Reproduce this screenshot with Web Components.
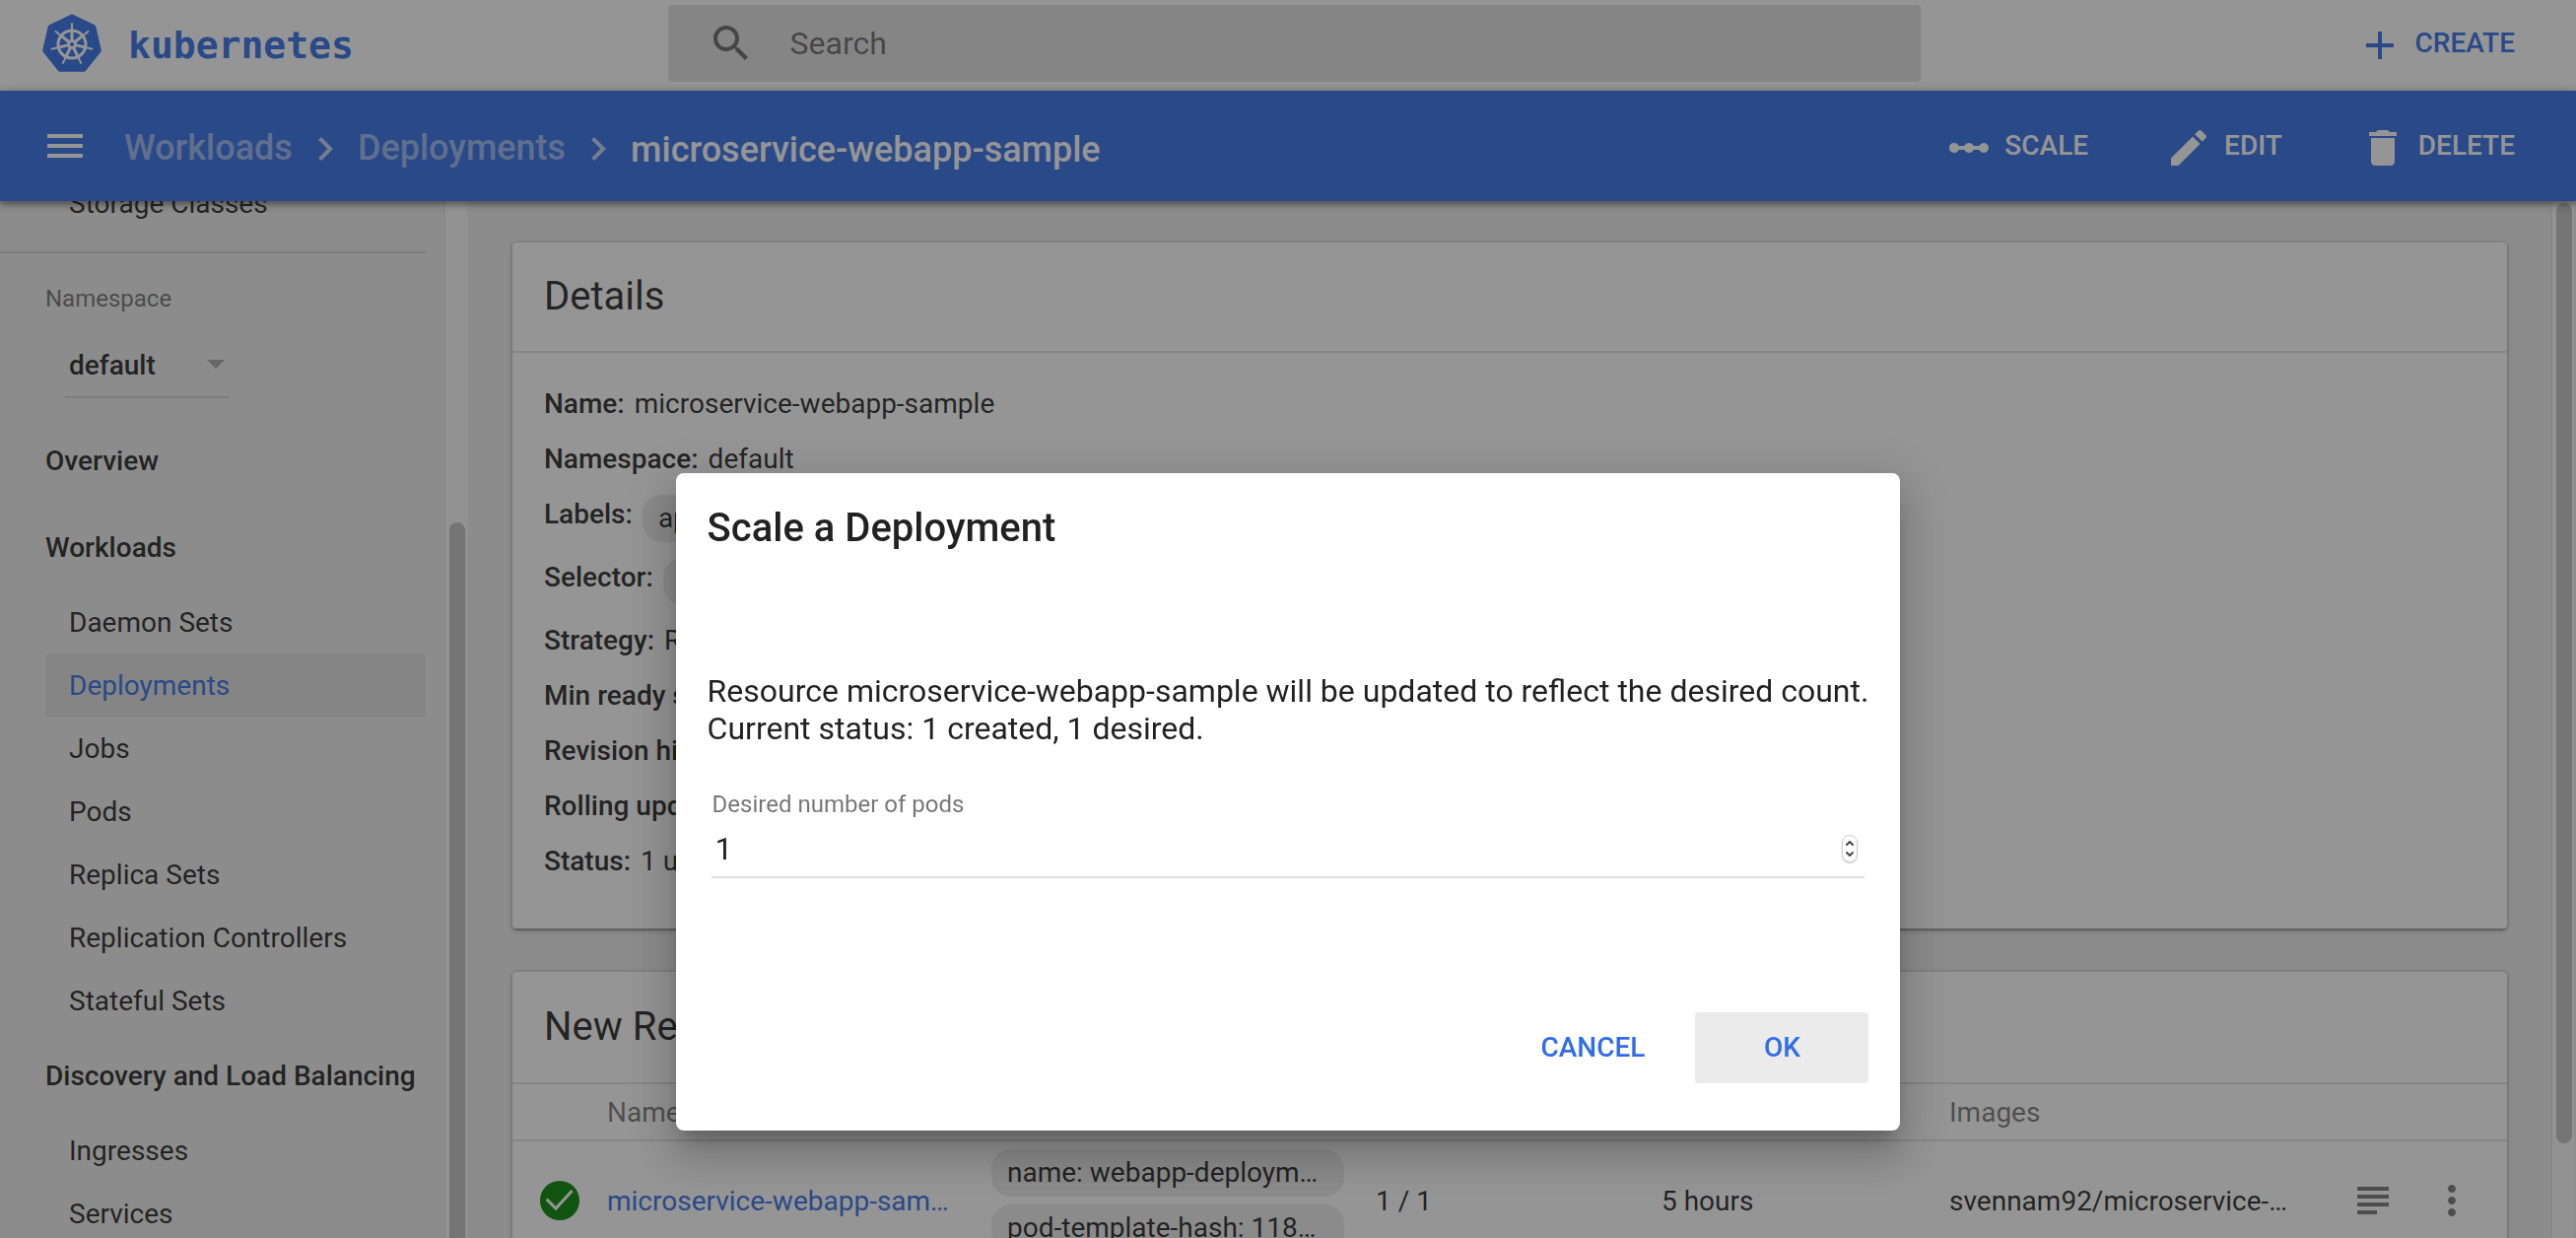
<!DOCTYPE html>
<html lang="en">
<head>
<meta charset="utf-8">
<title>microservice-webapp-sample - Kubernetes Dashboard</title>
<style>
  html, body { height: 100%; margin: 0; overflow: hidden; }
  body {
    font-family: Roboto, "Liberation Sans", sans-serif;
    font-size: 28px;
    color: rgba(0,0,0,.87);
    --primary: #326de6;
    --muted: rgba(0,0,0,.54);
    --line: #e0e0e0;
  }
</style>
</head>
<body>
<kd-app></kd-app>

<script>
const define = (name, html, setup) => {
  const template = document.createElement('template');
  template.innerHTML = html;
  customElements.define(name, class extends HTMLElement {
    constructor() {
      super();
      this.attachShadow({ mode: 'open' }).append(template.content.cloneNode(true));
    }
    connectedCallback() { if (setup) setup.call(this, this.shadowRoot); }
  });
};

const ICONS = {
  menu: '<path d="M3 18h18v-2H3v2zm0-5h18v-2H3v2zm0-7v2h18V6H3z"/>',
  search: '<path d="M15.5 14h-.79l-.28-.27C15.41 12.59 16 11.11 16 9.5 16 5.91 13.09 3 9.5 3S3 5.91 3 9.5 5.91 16 9.5 16c1.61 0 3.09-.59 4.23-1.57l.27.28v.79l5 4.99L20.49 19l-4.99-5zm-6 0C7.01 14 5 11.99 5 9.5S7.01 5 9.5 5 14 7.01 14 9.5 11.99 14 9.5 14z"/>',
  add: '<path d="M19 13h-6v6h-2v-6H5v-2h6V5h2v6h6v2z"/>',
  chevron: '<path d="M10 6L8.59 7.41 13.17 12l-4.58 4.59L10 18l6-6z"/>',
  scale: '<path d="M4.5 9.5a2.5 2.5 0 0 1 2.3 1.5h2.9a2.5 2.5 0 0 1 4.6 0h2.9a2.5 2.5 0 1 1 0 2h-2.9a2.5 2.5 0 0 1-4.6 0H6.8a2.5 2.5 0 1 1-2.3-3.5z"/>',
  edit: '<path d="M3 17.25V21h3.75L17.81 9.94l-3.75-3.75L3 17.25zM20.71 7.04c.39-.39.39-1.02 0-1.41l-2.34-2.34c-.39-.39-1.02-.39-1.41 0l-1.83 1.83 3.75 3.75 1.83-1.83z"/>',
  remove: '<path d="M6 19c0 1.1.9 2 2 2h8c1.1 0 2-.9 2-2V7H6v12zM19 4h-3.500l-1-1h-5l-1 1H5v2h14V4z"/>',
  check: '<circle cx="12" cy="12" r="10"/><path d="M5.300 11.300L10 16l8.300-9" fill="none" stroke="#fff" stroke-width="1.500"/>',
  logs: '<path d="M4 5h16v2H4zM4 9h16v2H4zM4 13h16v2H4zM4 17h10v2H4z"/>',
  more: '<path d="M12 8c1.100 0 2-.9 2-2s-.9-2-2-2-2 .9-2 2 .9 2 2 2zm0 2c-1.100 0-2 .9-2 2s.9 2 2 2 2-.9 2-2-.9-2-2-2zm0 6c-1.100 0-2 .9-2 2s.9 2 2 2 2-.9 2-2-.9-2-2-2z"/>'
};

define('kd-icon', `
  <style>
    :host { display: block; flex: none; width: 48px; height: 48px; }
    svg { display: block; width: 100%; height: 100%; fill: currentColor; }
  </style>
  <svg viewBox="0 0 24 24" aria-hidden="true"></svg>`,
  function (root) { root.querySelector('svg').innerHTML = ICONS[this.getAttribute('name')]; });

/* The seven-sided badge with the ship's wheel */
define('kd-logo', `
  <style>
    :host { display: flex; align-items: center; gap: 26px; color: var(--primary); }
    svg { display: block; width: 62px; height: 62px; }
    span { font: bold 38px/48px "DejaVu Sans Mono", monospace; padding-top: 4px; }
  </style>
  <svg viewBox="-31 -31 62 62" aria-hidden="true"></svg>
  <span>kubernetes</span>`,
  function (root) {
    const at = (r, i) => {
      const a = i * 2 * Math.PI / 7 - Math.PI / 2;
      return [r * Math.cos(a), r * Math.sin(a)].map(v => v.toFixed(2));
    };
    const turn = [0, 1, 2, 3, 4, 5, 6];
    const ray = (i, from, to) => {
      const [x1, y1] = at(from, i), [x2, y2] = at(to, i);
      return `<line x1="${x1}" y1="${y1}" x2="${x2}" y2="${y2}"/>`;
    };
    root.querySelector('svg').innerHTML = `
      <g transform="translate(0 1)">
      <polygon points="${turn.map(i => at(28, i).join()).join(' ')}" fill="currentColor" stroke="currentColor" stroke-width="5" stroke-linejoin="round"/>
      <g fill="none" stroke="#fff" stroke-linecap="round">
        <circle r="14" stroke-width="3"/>
        <g stroke-width="2">${turn.map(i => ray(i, 5, 21)).join('')}</g>
        <g stroke-width="3">${turn.map(i => ray(i, 4, 13)).join('')}</g>
      </g>
      <circle r="5" fill="#fff"/><circle r="2" fill="currentColor"/>
      </g>`;
  });

define('kd-action', `
  <style>
    :host { display: block; }
    button {
      display: flex; align-items: center; gap: 12px; height: 72px; padding: 0;
      border: 0; background: none; color: inherit; cursor: pointer;
      font: 500 28px/72px Roboto, sans-serif; text-transform: uppercase;
    }
    .icon { margin-top: 4px; }
  </style>
  <button type="button"><span class="icon"></span><slot></slot></button>`,
  function (root) {
    root.querySelector('.icon').innerHTML = `<kd-icon name="${this.getAttribute('icon')}"></kd-icon>`;
  });

define('kd-header', `
  <style>
    :host { display: block; background: #fff; }
    header { display: grid; grid-template-columns: minmax(0,1fr) minmax(0,1271px) minmax(0,1fr); align-items: center; height: 92px; box-sizing: border-box; padding: 0 30px 0 42px; column-gap: 24px; }
    label { display: flex; align-items: center; gap: 36px; height: 78px; box-sizing: border-box; padding: 0 40px; margin-bottom: 4px; border-radius: 4px; background: var(--line); color: var(--muted); }
    input { flex: 1; min-width: 0; padding: 0; border: 0; outline: 0; background: none; color: inherit; font: 32px/78px Roboto, sans-serif; }
    input::placeholder { color: var(--muted); opacity: 1; }
    kd-action { justify-self: end; margin: 0 32px 4px 0; color: var(--primary); }
    kd-logo { margin-bottom: 4px; }
  </style>
  <header>
    <kd-logo></kd-logo>
    <label><kd-icon name="search"></kd-icon><input type="search" placeholder="Search" aria-label="Search"></label>
    <kd-action icon="add">Create</kd-action>
  </header>`);

define('kd-toolbar', `
  <style>
    :host {
      display: flex; align-items: center; justify-content: space-between; height: 112px; box-sizing: border-box;
      padding: 0 62px 0 42px; background: var(--primary); color: #fff; position: relative; z-index: 1;
      box-shadow: 0 2px 10px rgba(0,0,0,.4), 0 4px 4px rgba(0,0,0,.2);
    }
    nav, .actions { display: flex; align-items: center; }
    nav { font-size: 36px; font-weight: 500; line-height: 48px; }
    .menu { padding: 0; border: 0; background: none; color: inherit; margin-right: 36px; cursor: pointer; }
    a { margin-top: 4px; color: inherit; opacity: .5; text-decoration: none; }
    nav > kd-icon { margin: 6px 9px 0; opacity: .7; }
    h1 { margin: 8px 0 0; font: inherit; }
    .actions { gap: 78px; }
  </style>
  <nav aria-label="Breadcrumb">
    <button class="menu" type="button" aria-label="Menu"><kd-icon name="menu"></kd-icon></button>
    <a href="#workloads">Workloads</a>
    <kd-icon name="chevron"></kd-icon>
    <a href="#deployments">Deployments</a>
    <kd-icon name="chevron"></kd-icon>
    <h1>microservice-webapp-sample</h1>
  </nav>
  <div class="actions">
    <kd-action icon="scale">Scale</kd-action>
    <kd-action icon="edit">Edit</kd-action>
    <kd-action icon="remove">Delete</kd-action>
  </div>`);

/* Scroll track; --before, --thumb and --after are its proportions */
define('kd-rail', `
  <style>
    :host {
      display: grid; flex: none; width: 26px; box-sizing: border-box; padding: 2px 2px 0 4px;
      grid-template-rows: var(--before, 0fr) var(--thumb, 1fr) var(--after, 0fr);
      background: #fafafa; border-left: 2px solid #e8e8e8; border-right: 2px solid #f0f0f0;
    }
    i { grid-row: 2; border-radius: 8px; background: #c1c1c1; }
    :host([cut]) i { border-radius: 8px 8px 0 0; }
  </style><i></i>`);

define('kd-nav-item', `
  <style>
    :host { display: block; line-height: 64px; }
    a { display: block; padding-left: 24px; border-radius: 4px; color: inherit; text-decoration: none; }
    :host([heading]) a { line-height: 88px; padding-left: 0; font-weight: 500; white-space: nowrap; }
    :host([active]) a { background: var(--line); color: var(--primary); }
  </style>
  <a href="#"><slot></slot></a>`);

define('kd-sidebar', `
  <style>
    :host { display: flex; flex: none; width: 476px; min-height: 0; background: #eee; }
    .view { flex: 1; overflow: hidden; }
    nav { padding: 0 18px 16px 46px; }
    hr { margin: 16px 0 0 -46px; border: 0; border-top: 2px solid #d1d1d1; }
    .ns { display: flex; flex-direction: column; align-items: flex-start; padding: 32px 0 20px; gap: 23px; }
    label { font-size: 24px; line-height: 28px; color: var(--muted); }
    .select { display: flex; align-items: center; width: 166px; height: 62px; margin-left: 20px; border-bottom: 2px solid #d1d1d1; }
    select { flex: 1; min-width: 0; height: 62px; padding: 0 4px; border: 0; outline: 0; appearance: none; background: none; color: inherit; font: 500 28px/62px Roboto, sans-serif; }
    .arrow { margin: 0 4px 4px 0; border: solid transparent; border-width: 9px 9px 0; border-top-color: rgba(0,0,0,.3); }
  </style>
  <div class="view">
    <nav>
      <kd-nav-item>Storage Classes</kd-nav-item>
      <hr>
      <div class="ns">
        <label for="ns">Namespace</label>
        <div class="select"><select id="ns"><option>default</option></select><span class="arrow"></span></div>
      </div>
      <kd-nav-item heading>Overview</kd-nav-item>
      <kd-nav-item heading>Workloads</kd-nav-item>
      <kd-nav-item>Daemon Sets</kd-nav-item>
      <kd-nav-item active>Deployments</kd-nav-item>
      <kd-nav-item>Jobs</kd-nav-item>
      <kd-nav-item>Pods</kd-nav-item>
      <kd-nav-item>Replica Sets</kd-nav-item>
      <kd-nav-item>Replication Controllers</kd-nav-item>
      <kd-nav-item>Stateful Sets</kd-nav-item>
      <kd-nav-item heading>Discovery and Load Balancing</kd-nav-item>
      <kd-nav-item>Ingresses</kd-nav-item>
      <kd-nav-item>Services</kd-nav-item>
    </nav>
  </div>
  <kd-rail cut style="--before:324fr;--thumb:726fr"></kd-rail>`,
  function (root) {
    const view = root.querySelector('.view');
    const place = () => { view.scrollTop = 29; };
    place();
    requestAnimationFrame(place);
    addEventListener('load', place);
  });

define('kd-card', `
  <style>
    :host {
      display: block; flex: none; border-radius: 4px; background: #fff;
      box-shadow: 0 2px 6px rgba(0,0,0,.2), 0 2px 2px rgba(0,0,0,.14), 0 4px 2px -2px rgba(0,0,0,.12), 0 0 0 2px rgba(0,0,0,.06);
    }
    h2 { margin: 0; padding: 0 32px; border-bottom: 2px solid var(--line); font-size: 40px; font-weight: 400; line-height: 110px; }
    :host([tall]) h2 { line-height: 112px; }
  </style>
  <h2><slot name="title"></slot></h2>
  <slot></slot>`);

define('kd-chip', `
  <style>
    :host { display: block; height: 48px; padding: 0 16px; border-radius: 20px; background: #ebebeb; line-height: 48px; white-space: nowrap; }
  </style><slot></slot>`);

define('kd-row', `
  <style>
    :host { display: flex; align-items: flex-start; gap: 10px; line-height: 56px; white-space: nowrap; }
    b { font-weight: 500; }
    ::slotted(kd-chip) { margin: 8px 0; }
  </style>
  <b></b><slot></slot>`,
  function (root) { root.querySelector('b').textContent = this.getAttribute('label') + ':'; });

define('kd-replicas', `
  <style>
    :host { display: block; }
    table { width: 100%; border-collapse: collapse; table-layout: fixed; }
    th { height: 56px; padding: 0; border-bottom: 2px solid var(--line); color: var(--muted); font-weight: 400; text-align: left; }
    td { height: 104px; padding: 8px 32px 8px 0; white-space: nowrap; }
    td:first-child { padding: 8px 0 8px 24px; }
    .labels { display: flex; flex-direction: column; gap: 8px; }
    a { color: var(--primary); text-decoration: none; }
    kd-icon[name=check] { color: #008200; }
    .tools { display: flex; gap: 32px; color: rgba(0,0,0,.54); }
    button { padding: 0; border: 0; background: none; color: inherit; }
    .last { padding-right: 0; }
  </style>
  <table>
    <colgroup><col style="width:96px"><col style="width:390px"><col style="width:390px"><col style="width:290px"><col style="width:292px"><col style="width:406px"><col></colgroup>
    <thead><tr><th></th><th>Name</th><th>Labels</th><th>Pods</th><th>Age</th><th>Images</th><th></th></tr></thead>
    <tbody><tr>
      <td><kd-icon name="check"></kd-icon></td>
      <td><a href="#replica">microservice-webapp-sam…</a></td>
      <td><div class="labels"><kd-chip>name: webapp-deploym…</kd-chip><kd-chip>pod-template-hash: 118…</kd-chip></div></td>
      <td>1 / 1</td>
      <td>5 hours</td>
      <td>svennam92/microservice-…</td>
      <td class="last"><div class="tools">
        <button type="button" aria-label="Logs"><kd-icon name="logs"></kd-icon></button>
        <button type="button" aria-label="More"><kd-icon name="more"></kd-icon></button>
      </div></td>
    </tr></tbody>
  </table>`);

define('kd-content', `
  <style>
    :host { display: flex; flex: 1; min-width: 0; min-height: 0; background: #eee; }
    main { flex: 1; min-width: 0; display: flex; flex-direction: column; gap: 44px; padding: 42px 44px; overflow: hidden; }
    .rows { padding: 24px 32px 40px; }
  </style>
  <main>
    <kd-card>
      <span slot="title">Details</span>
      <div class="rows">
        <kd-row label="Name">microservice-webapp-sample</kd-row>
        <kd-row label="Namespace">default</kd-row>
        <kd-row label="Labels"><kd-chip>app: webapp</kd-chip></kd-row>
        <kd-row label="Selector"><kd-chip>app: webapp</kd-chip></kd-row>
        <kd-row label="Strategy">RollingUpdate</kd-row>
        <kd-row label="Min ready seconds">0</kd-row>
        <kd-row label="Revision history limit">10</kd-row>
        <kd-row label="Rolling update strategy">Max surge: 1</kd-row>
        <kd-row label="Status">1 updated</kd-row>
      </div>
    </kd-card>
    <kd-card tall>
      <span slot="title">New Replica Set</span>
      <kd-replicas></kd-replicas>
    </kd-card>
  </main>
  <kd-rail style="--thumb:954fr;--after:96fr"></kd-rail>`);

define('kd-button', `
  <style>
    :host { display: block; }
    button {
      min-width: 176px; height: 72px; padding: 0 16px; border: 0; border-radius: 4px; background: none; color: var(--primary);
      font: 500 28px/72px Roboto, sans-serif; text-transform: uppercase; cursor: pointer;
    }
    :host([focused]) button { background: #ebebeb; }
  </style>
  <button type="button"><slot></slot></button>`);

define('kd-scale-dialog', `
  <style>
    :host { position: fixed; inset: 0; z-index: 10; display: flex; align-items: flex-start; justify-content: center; padding-top: 480px; background: rgba(33,33,33,.48); }
    section {
      box-sizing: border-box; padding: 32px 32px 48px; border-radius: 8px; background: #fff;
      box-shadow: 0 14px 16px -8px rgba(0,0,0,.2), 0 26px 38px 4px rgba(0,0,0,.14), 0 10px 48px 8px rgba(0,0,0,.12);
    }
    h2 { margin: 0 0 122px; font-size: 40px; font-weight: 500; line-height: 48px; }
    p { margin: 0; font-size: 32px; line-height: 38px; }
    .field { margin: 44px 4px 136px; }
    label { display: block; padding-left: 1px; color: var(--muted); font-size: 24px; line-height: 28px; }
    .box { display: flex; align-items: center; height: 56px; border-bottom: 2px solid var(--line); padding: 3px 7px 0 4px; }
    input { flex: 1; min-width: 0; height: 56px; padding: 0; border: 0; outline: 0; appearance: textfield; color: inherit; font: 32px/56px Roboto, sans-serif; }
    input::-webkit-inner-spin-button { appearance: none; }
    .step { width: 16px; height: 28px; box-sizing: border-box; border-radius: 8px; border: 1px solid #ccc; box-shadow: 0 1px 1px rgba(0,0,0,.2); }
    .step svg { display: block; width: 14px; height: 26px; fill: none; stroke: #444; stroke-width: 2; stroke-linecap: round; stroke-linejoin: round; }
    .actions { display: flex; justify-content: flex-end; gap: 16px; }
  </style>
  <section role="dialog" aria-labelledby="t">
    <h2 id="t">Scale a Deployment</h2>
    <p>Resource microservice-webapp-sample will be updated to reflect the desired count.<br>Current status: 1 created, 1 desired.</p>
    <div class="field">
      <label for="pods">Desired number of pods</label>
      <div class="box">
        <input id="pods" type="number" value="1" min="0">
        <span class="step" aria-hidden="true"><svg viewBox="0 0 14 26"><path d="M4 9l3-3 3 3M4 17l3 3 3-3"/></svg></span>
      </div>
    </div>
    <div class="actions">
      <kd-button>Cancel</kd-button>
      <kd-button focused>OK</kd-button>
    </div>
  </section>`);

define('kd-app', `
  <style>
    :host { display: flex; flex-direction: column; height: 100vh; }
    .body { flex: 1; min-height: 0; display: flex; }
  </style>
  <kd-header></kd-header>
  <kd-toolbar></kd-toolbar>
  <div class="body">
    <kd-sidebar></kd-sidebar>
    <kd-content></kd-content>
  </div>
  <kd-scale-dialog></kd-scale-dialog>`);
</script>
</body>
</html>
